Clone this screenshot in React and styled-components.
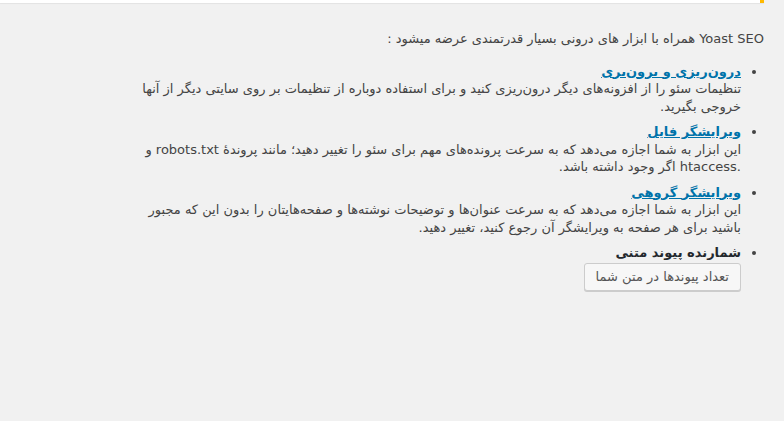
import React from 'react';
import styled, { createGlobalStyle } from 'styled-components';

const GlobalStyle = createGlobalStyle`
  html, body {
    margin: 0;
    padding: 0;
    background: #f1f1f1;
  }
  body {
    direction: rtl;
    font-family: Tahoma, "DejaVu Sans", sans-serif;
    font-size: 13px;
    line-height: 17.5px;
    color: #444;
  }
`;

const Page = styled.div`
  min-height: 421px;
`;

const Notice = styled.div`
  height: 3px;
  margin-right: 20px;
  background: #fff;
  border-right: 4px solid #ffb900;
  box-shadow: 0 1px 1px rgba(0, 0, 0, 0.06);
`;

const Content = styled.div`
  width: 643px;
  margin-right: 20px;
  padding-top: 27px;
`;

const Intro = styled.p`
  margin: 0 0 15px;
`;

const ToolList = styled.ul`
  margin: 0 23px 0 0;
  padding: 0;
  list-style: disc;
`;

const Tool = styled.li`
  margin-bottom: 8px;
`;

const ToolTitle = styled.strong`
  display: block;
  font-weight: bold;
  color: #23282d;
`;

const ToolLink = styled.a`
  color: #0073aa;
  text-decoration: underline;
`;

const Button = styled.button`
  display: inline-block;
  height: 28px;
  margin: 1px 0 0;
  padding: 0 11px 1px;
  font-family: inherit;
  font-size: 13px;
  line-height: 26px;
  color: #555;
  background: #f7f7f7;
  border: 1px solid #ccc;
  border-radius: 3px;
  box-shadow: 0 1px 0 #ccc;
  cursor: pointer;
`;

const tools = [
  {
    title: 'درون‌ریزی و برون‌بری',
    text: 'تنظیمات سئو را از افزونه‌های دیگر درون‌ریزی کنید و برای استفاده دوباره از تنظیمات بر روی سایتی دیگر از آنها خروجی بگیرید.',
  },
  {
    title: 'ویرایشگر فایل',
    text: 'این ابزار به شما اجازه می‌دهد که به سرعت پرونده‌های مهم برای سئو را تغییر دهید؛ مانند پروندهٔ robots.txt و .htaccess اگر وجود داشته باشد.',
  },
  {
    title: 'ویرایشگر گروهی',
    text: 'این ابزار به شما اجازه می‌دهد که به سرعت عنوان‌ها و توضیحات نوشته‌ها و صفحه‌هایتان را بدون این که مجبور باشید برای هر صفحه به ویرایشگر آن رجوع کنید، تغییر دهید.',
  },
];

const App = () => {
  return (
    <Page>
      <GlobalStyle />
      <Notice />
      <Content>
        <Intro>Yoast SEO همراه با ابزار های درونی بسیار قدرتمندی عرضه میشود :</Intro>
        <ToolList>
          {tools.map((tool) => (
            <Tool key={tool.title}>
              <ToolTitle>
                <ToolLink href="#">{tool.title}</ToolLink>
              </ToolTitle>
              {tool.text}
            </Tool>
          ))}
          <Tool>
            <ToolTitle>شمارنده پیوند متنی</ToolTitle>
            <Button type="button">تعداد پیوندها در متن شما</Button>
          </Tool>
        </ToolList>
      </Content>
    </Page>
  );
};

export default App;
